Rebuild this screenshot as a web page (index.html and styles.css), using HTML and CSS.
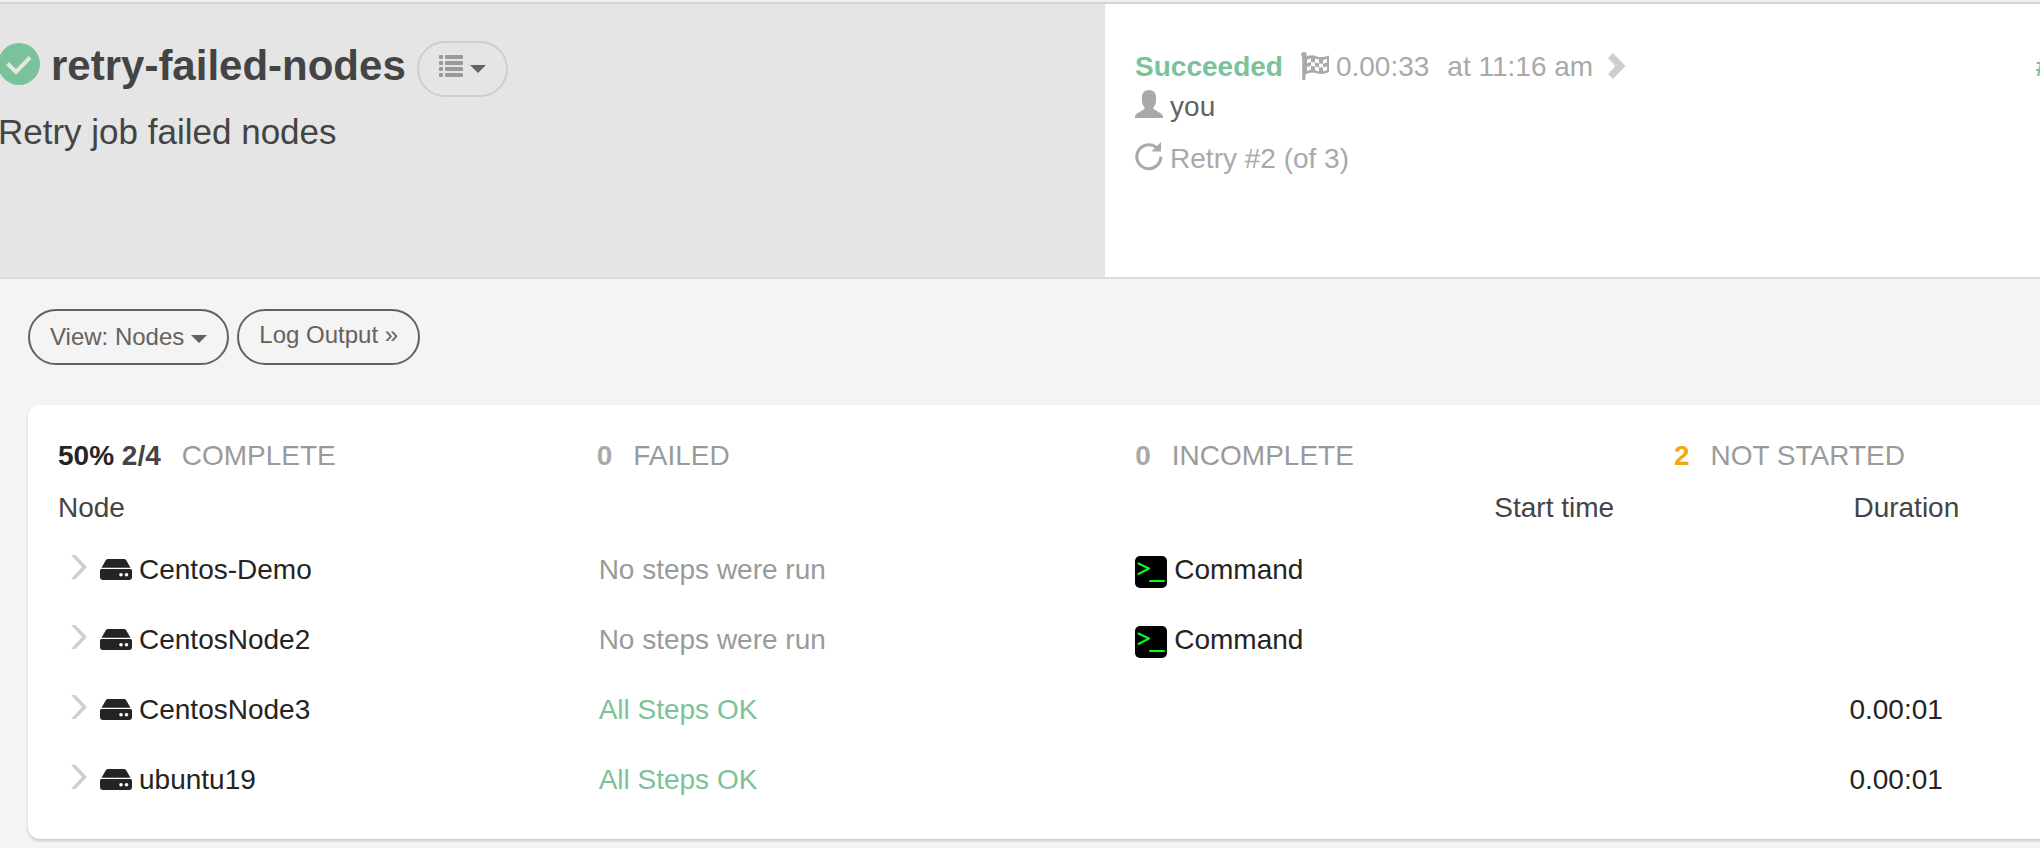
FILE: index.html
```html
<!DOCTYPE html>
<html lang="en">
<head>
<meta charset="utf-8">
<title>retry-failed-nodes</title>
<link rel="stylesheet" href="styles.css">
</head>
<body>
<svg class="sprite" aria-hidden="true">
  <symbol id="chevron-thin" viewBox="0 0 16 30"><path d="M0 0H4.500L16 12L4.500 24H0L11 12Z" fill="#cfcfca"/></symbol>
  <symbol id="drive" viewBox="0 0 32 23"><path d="M8 0H24Q25.500 0 26.200 1.200L30.500 8.800H1.500L5.800 1.200Q6.500 0 8 0ZM1.500 10H30.500Q32 10 32 11.500V18Q32 21 29 21H3Q0 21 0 18V11.500Q0 10 1.500 10Z" fill="#252422"/><circle cx="21" cy="15.800" r="1.800" fill="#fff"/><circle cx="26.500" cy="15.800" r="1.800" fill="#fff"/></symbol>
  <symbol id="terminal" viewBox="0 0 32 36"><rect y="4" width="32" height="32" rx="5"/><path d="M3.500 11.500L14 16.500L3.500 22M15 29H29" fill="none" stroke="#00ff1e" stroke-width="2" stroke-linecap="round" stroke-linejoin="round"/></symbol>
</svg>

<header class="job-header">
  <section class="job">
    <div class="job-title">
      <h1>
        <svg width="42" height="46" viewBox="0 0 42 46" aria-hidden="true"><circle cx="21" cy="21" r="21" fill="#7ac29a"/><path d="M9.500 20.500L18 29L32 14.500" fill="none" stroke="#e5e5e5" stroke-width="4"/></svg>
        retry-failed-nodes
      </h1>
      <button class="btn btn-muted" type="button" aria-label="Job actions">
        <svg class="list-icon" width="24" height="28" viewBox="0 0 24 28" aria-hidden="true" fill="#9a9a9a">
          <rect width="4" height="4" rx="1"/><rect x="6" width="18" height="4" rx="1"/>
          <rect y="6" width="4" height="4" rx="1"/><rect x="6" y="6" width="18" height="4" rx="1"/>
          <rect y="12" width="4" height="4" rx="1"/><rect x="6" y="12" width="18" height="4" rx="1"/>
          <rect y="18" width="4" height="4" rx="1"/><rect x="6" y="18" width="18" height="4" rx="1"/>
        </svg>
        <span class="caret"></span>
      </button>
    </div>
    <p class="job-description">Retry job failed nodes</p>
  </section>
  <section class="status">
    <div class="status-line">
      <strong class="succeeded">Succeeded</strong>
      <span class="with-icon">
        <svg width="28" height="30" viewBox="0 0 28 30" aria-hidden="true" fill="#a9a9a9">
          <circle cx="3" cy="2.800" r="2.800"/><path d="M1.200 3H4.400V27Q4.400 28 3.400 28H2.200Q1.200 28 1.200 27Z"/>
          <path d="M4 5Q10 2 16 4.500Q21 6 28 3.500V20Q21 23.500 15 21Q10 19.500 4 22.500Z"/>
          <path d="M6 8Q8 6.500 10 6.200V10Q8 10 6 11.500ZM14 6.500L18 7.500V11.500L14 10.500ZM22 8L26 6.800V10.500L22 11.700ZM10 10L14 10.500V14.500L10 14ZM18 11.500L22 11.700V15.500L18 15.500ZM6 15Q8 14 10 14V17.800Q8 18 6 19ZM14 14.500L18 15.500V19.500L14 18.300ZM22 15.500L26 14.300V18.300L22 19.500Z" fill="#fff"/>
        </svg>
        0.00:33
      </span>
      <span>at 11:16 am</span>
      <svg class="more" width="18" height="28" viewBox="0 0 18 28" aria-hidden="true"><path d="M5 0L17.500 13L5 26L0 21L7.300 13L0 5Z" fill="#cfcfca"/></svg>
      <a class="execution-link" href="#">#</a>
    </div>
    <div class="with-icon user">
      <svg width="28" height="34" viewBox="0 0 28 34" aria-hidden="true"><path d="M14 0C18.500 0 21 3 21 7V10.500C21 13.500 20 15.500 18.500 17.500V19L26 23.500Q28 24.800 28 26.500V28H0V26.500Q0 24.800 2 23.500L9.500 19V17.500C8 15.500 7 13.500 7 10.500V7C7 3 9.500 0 14 0Z" fill="#a9a9a9"/></svg>
      you
    </div>
    <div class="with-icon retry">
      <svg width="28" height="34" viewBox="0 0 28 34" aria-hidden="true"><path d="M21.500 5.500A12 12 0 1 0 25.800 14.500" fill="none" stroke="#a9a9a9" stroke-width="3"/><path d="M26 0V9.500H16.500Z" fill="#a9a9a9"/></svg>
      Retry #2 (of 3)
    </div>
  </section>
</header>

<main class="content">
  <nav class="toolbar" aria-label="Views">
    <button class="btn" type="button">View: Nodes <span class="caret"></span></button>
    <a class="btn btn-link" href="#">Log Output »</a>
  </nav>

  <section class="card">
    <div class="summary">
      <div><strong><b class="percent">50%</b> 2/4</strong><span>COMPLETE</span></div>
      <div><strong class="zero">0</strong><span>FAILED</span></div>
      <div><strong class="zero">0</strong><span>INCOMPLETE</span></div>
      <div><strong class="waiting">2</strong><span>NOT STARTED</span></div>
    </div>
    <table class="nodes">
      <colgroup><col class="col-wide"><col class="col-wide"><col><col><col></colgroup>
      <thead>
        <tr><th scope="col">Node</th><td></td><td></td><th scope="col">Start time</th><th scope="col">Duration</th></tr>
      </thead>
      <tbody>
        <tr>
          <td><div class="node"><svg width="16" height="30" aria-hidden="true"><use href="#chevron-thin"/></svg><svg width="32" height="23" aria-hidden="true"><use href="#drive"/></svg><span>Centos-Demo</span></div></td>
          <td class="not-run">No steps were run</td>
          <td><div class="with-icon"><svg width="32" height="36" aria-hidden="true"><use href="#terminal"/></svg>Command</div></td>
          <td></td><td></td>
        </tr>
        <tr>
          <td><div class="node"><svg width="16" height="30" aria-hidden="true"><use href="#chevron-thin"/></svg><svg width="32" height="23" aria-hidden="true"><use href="#drive"/></svg><span>CentosNode2</span></div></td>
          <td class="not-run">No steps were run</td>
          <td><div class="with-icon"><svg width="32" height="36" aria-hidden="true"><use href="#terminal"/></svg>Command</div></td>
          <td></td><td></td>
        </tr>
        <tr>
          <td><div class="node"><svg width="16" height="30" aria-hidden="true"><use href="#chevron-thin"/></svg><svg width="32" height="23" aria-hidden="true"><use href="#drive"/></svg><span>CentosNode3</span></div></td>
          <td class="ok">All Steps OK</td>
          <td></td><td></td><td><div class="duration">0.00:01</div></td>
        </tr>
        <tr>
          <td><div class="node"><svg width="16" height="30" aria-hidden="true"><use href="#chevron-thin"/></svg><svg width="32" height="23" aria-hidden="true"><use href="#drive"/></svg><span>ubuntu19</span></div></td>
          <td class="ok">All Steps OK</td>
          <td></td><td></td><td><div class="duration">0.00:01</div></td>
        </tr>
      </tbody>
    </table>
  </section>
</main>
</body>
</html>
```
FILE: styles.css
```css
* {
  box-sizing: border-box;
}

html,
body {
  overflow: hidden;
}

body {
  margin: 0;
  border-top: 2px solid #efefef;
  background: #f4f4f4;
  color: #444;
  font: 28px/40px "Liberation Sans", Arial, sans-serif;
}

svg {
  flex: none;
}

.sprite {
  display: none;
}

.job-header {
  display: flex;
  border-top: 2px solid #d5d5d5;
  border-bottom: 2px solid #ddd;
  background: #fff;
}

.job {
  width: 54.17%;
  padding: 37px 0 124px;
  background: #e5e5e5;
}

.job-title {
  display: flex;
  align-items: flex-start;
  gap: 11px;
  margin-left: -2px;
}

h1 {
  display: flex;
  align-items: center;
  gap: 11px;
  margin: 0;
  font-size: 42px;
  line-height: 50px;
}

.job-description {
  margin: 14px 0 0 -2px;
  font-size: 35px;
  line-height: 42px;
}

.status {
  flex: 1;
  padding: 43px 0 0 30px;
  color: #a9a9a9;
}

.status-line {
  display: flex;
  align-items: center;
  gap: 18px;
  margin-right: -11px;
  white-space: nowrap;
}

.succeeded,
.execution-link {
  color: #7ac29a;
}

.more {
  margin-left: -3px;
}

.execution-link {
  margin-left: auto;
  font-weight: bold;
  text-decoration: none;
}

.with-icon {
  display: flex;
  align-items: center;
  gap: 7px;
}

.user {
  color: #66615b;
}

.retry {
  margin-top: 12px;
}

.btn {
  display: flex;
  align-items: center;
  gap: 7px;
  height: 56px;
  padding: 0 20px;
  border: 2px solid #66615b;
  border-radius: 28px;
  background: transparent;
  color: #66615b;
  font: 24px/28px "Liberation Sans", Arial, sans-serif;
  text-decoration: none;
}

.btn-muted {
  border-color: #cfcfca;
}

.btn-link {
  padding-bottom: 4px;
}

.caret {
  margin-top: 4px;
  border: 8px solid transparent;
  border-top-color: currentColor;
  border-bottom: 0;
}

.btn-muted .caret {
  margin-top: 0;
}

.content {
  width: 111.3%;
  padding: 30px 28px 9px;
}

.toolbar {
  display: flex;
  gap: 8px;
  margin-bottom: 40px;
}

.card {
  padding: 31px 30px 24px;
  border-radius: 12px;
  background: #fff;
  box-shadow: 0 2px 3px rgba(0, 0, 0, 0.18);
}

.summary {
  display: grid;
  grid-template-columns: repeat(4, 1fr);
  margin-bottom: 12px;
  color: #9a9a9a;
}

.summary div {
  display: flex;
  gap: 21px;
}

.summary strong {
  color: #444;
}

.summary .percent {
  color: #252422;
}

.summary .zero {
  color: #a9a9a9;
}

.summary .waiting {
  color: #f3a815;
}

.nodes {
  width: 100%;
  border-collapse: collapse;
  table-layout: fixed;
}

.col-wide {
  width: 25%;
}

.nodes th,
.nodes td {
  padding: 0;
  font-weight: normal;
  text-align: left;
}

.nodes thead th {
  padding-bottom: 7px;
}

.nodes tbody tr {
  height: 70px;
  color: #252422;
}

.node {
  display: flex;
  align-items: center;
  gap: 7px;
  padding-left: 13px;
}

.node svg:first-child {
  margin-right: 6px;
}

.duration {
  margin-left: -4px;
}

.nodes tbody .not-run {
  padding-left: 2px;
  color: #9a9a9a;
}

.nodes tbody .ok {
  padding-left: 2px;
  color: #7ac29a;
}
```
